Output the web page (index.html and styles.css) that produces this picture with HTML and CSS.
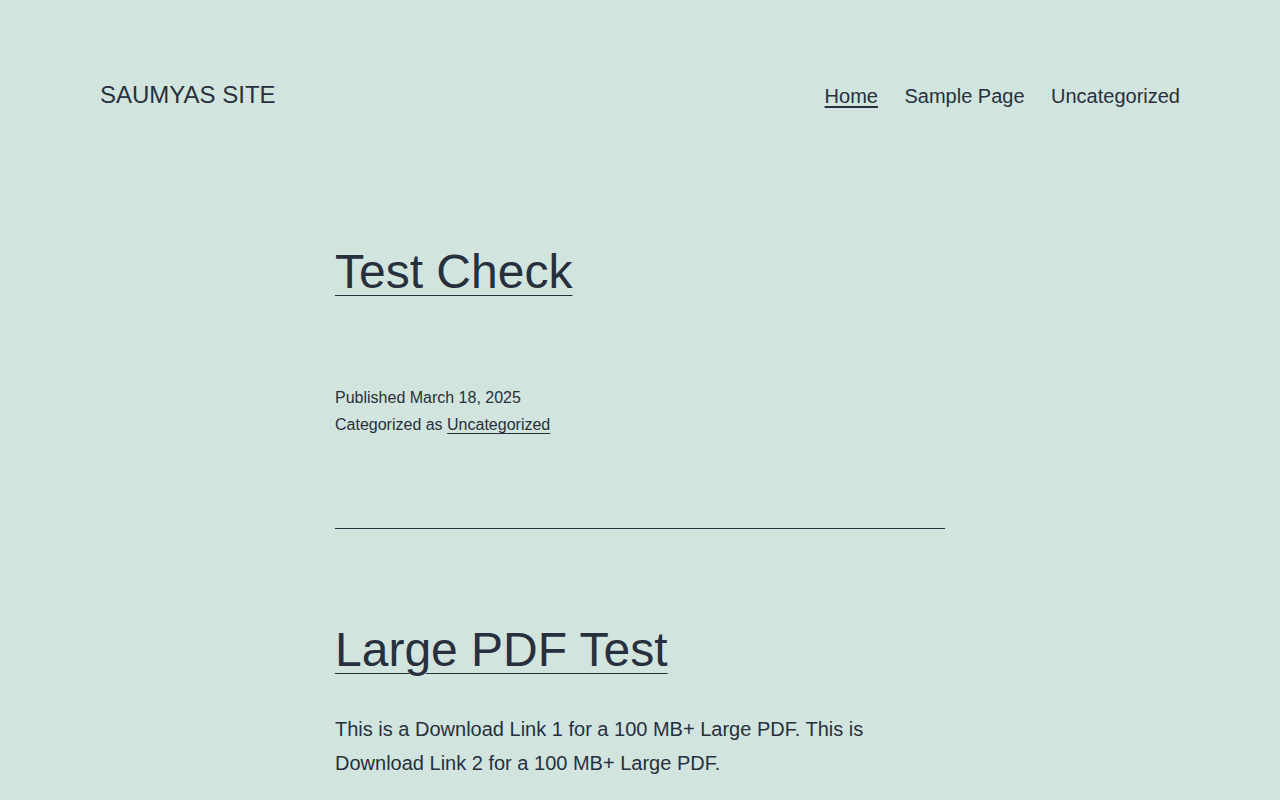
FILE: index.html
```html
<!DOCTYPE html>
<html lang="en">
<head>
	<meta charset="UTF-8">
	<title>Saumyas Site</title>
	<link rel="stylesheet" href="styles.css">
</head>
<body>

<header class="siteHeader">
	<p class="siteHeader__title">SAUMYAS SITE</p>
	<nav class="menu">
		<a class="menu__item menu__item_current" href="#">Home</a>
		<a class="menu__item" href="#">Sample Page</a>
		<a class="menu__item" href="#">Uncategorized</a>
	</nav>
</header>

<main class="posts">
	<article class="post">
		<h2 class="post__title"><a href="#">Test Check</a></h2>
		<div class="post__meta">
			<div>Published March 18, 2025</div>
			<div>Categorized as <a href="#">Uncategorized</a></div>
		</div>
	</article>

	<hr class="posts__separator">

	<article class="post">
		<h2 class="post__title post__title_second"><a href="#">Large PDF Test</a></h2>
		<p class="post__text">This is a Download Link 1 for a 100 MB+ Large PDF. This is Download Link 2 for a 100 MB+ Large PDF.</p>
	</article>
</main>

</body>
</html>
```

FILE: styles.css
```css
body {
	margin: 0;
	padding: 0;
	background-color: #d1e4dd;
	color: #28303d;
	font-family: "Liberation Sans", Arial, sans-serif;
}

a {
	color: #28303d;
}

.siteHeader {
	display: flex;
	justify-content: space-between;
	align-items: baseline;
	padding: 78px 100px 0;
}

.siteHeader__title {
	margin: 0;
	font-size: 24px;
	line-height: 1.4;
}

.menu {
	display: flex;
	gap: 26.5px;
	font-size: 20px;
	line-height: 1.4;
}

.menu__item {
	text-decoration: none;
}

.menu__item_current {
	text-decoration: underline;
	text-decoration-thickness: 2px;
	text-underline-offset: 3px;
}

.posts {
	width: 610px;
	margin: 129px auto 0;
}

.post__title {
	margin: 0;
	font-size: 48px;
	font-weight: normal;
	line-height: 1.3;
}

.post__title a {
	text-decoration-thickness: 1px;
	text-underline-offset: 7px;
}

.post__meta {
	margin-top: 81px;
	font-size: 16px;
	line-height: 1.7;
}

.post__meta a {
	text-decoration-thickness: 1px;
	text-underline-offset: 3px;
}

.posts__separator {
	margin: 90px 0 0;
	border: none;
	border-top: 1px solid #28303d;
	height: 0;
}

.post__title_second {
	margin-top: 90px;
}

.post__text {
	margin: 30px 0 0;
	font-size: 20px;
	line-height: 1.7;
}
```
